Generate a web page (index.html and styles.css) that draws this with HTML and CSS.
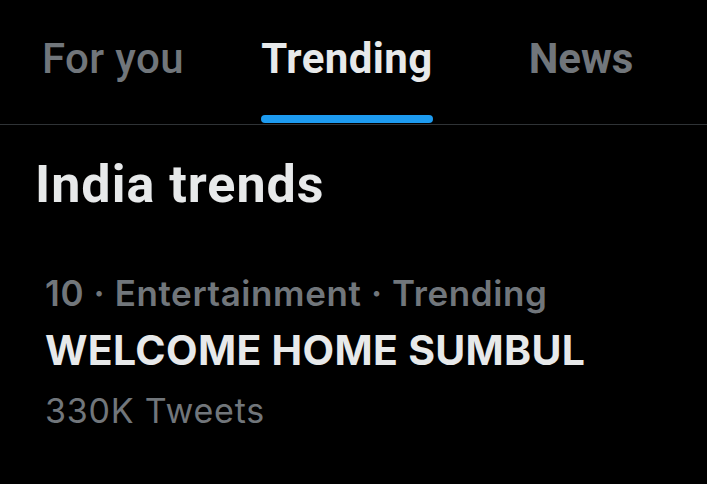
FILE: index.html
```html
<!DOCTYPE html>
<html lang="en">
<head>
    <meta charset="UTF-8">
    <meta name="viewport" content="width=device-width, initial-scale=1.0">
    <title>Explore</title>
    <link rel="stylesheet" href="styles.css">
</head>
<body>

    <!-- Pestañas superiores -->
    <nav class="tab-bar">
        <a class="tab tab-light">
            <div class="tab-inner">
                <span class="tab-label">For you</span>
            </div>
        </a>
        <a class="tab is-active">
            <div class="tab-inner">
                <span class="tab-label">Trending</span>
                <span class="tab-indicator"></span>
            </div>
        </a>
        <a class="tab">
            <div class="tab-inner">
                <span class="tab-label">News</span>
            </div>
        </a>
    </nav>

    <section class="trends">
        <h2 class="trends-title">India trends</h2>

        <div class="trend">
            <div class="trend-meta">10 · Entertainment · Trending</div>
            <div class="trend-name">WELCOME HOME SUMBUL</div>
            <div class="trend-count">330K Tweets</div>
        </div>
    </section>

</body>
</html>
```

FILE: styles.css
```css
/* Estilos generales */
body {
    margin: 0;
    background-color: #000;
    color: #e7e9ea;
    font-family: Roboto, "Liberation Sans", sans-serif;
    overflow: hidden;
}

/* Barra de pestañas */
.tab-bar {
    display: grid;
    grid-template-columns: repeat(3, 234px);
    margin-left: -4px;
    height: 124px;
    border-bottom: 1px solid #2f3336;
}

.tab {
    display: flex;
    justify-content: center;
    padding-top: 34px;
    color: #71767b;
    font-size: 42px;
    font-weight: 700;
    line-height: 50px;
}

.tab-light {
    font-weight: 500;
    letter-spacing: 0.4px;
}

.tab-inner {
    display: flex;
    flex-direction: column;
}

.tab.is-active {
    color: #e7e9ea;
    letter-spacing: 0.4px;
}

.tab-indicator {
    height: 8px;
    margin-top: 31px;
    border-radius: 4px;
    background-color: #1d9bf0;
}

/* Lista de tendencias */
.trends-title {
    margin: 30px 0 0 35px;
    font-size: 52px;
    line-height: 60px;
    letter-spacing: 1px;
    font-weight: 700;
}

.trend {
    padding: 58px 0 0 45px;
    font-family: Inter, Roboto, sans-serif;
}

.trend-meta {
    color: #71767b;
    font-size: 35px;
    line-height: 40px;
    font-weight: 600;
    letter-spacing: 0.6px;
}

.trend-name {
    margin-top: 13px;
    font-size: 41px;
    line-height: 48px;
    font-weight: 700;
    letter-spacing: 0.3px;
}

.trend-count {
    margin-top: 17px;
    color: #71767b;
    font-size: 34px;
    line-height: 40px;
    letter-spacing: 0.8px;
}
```
